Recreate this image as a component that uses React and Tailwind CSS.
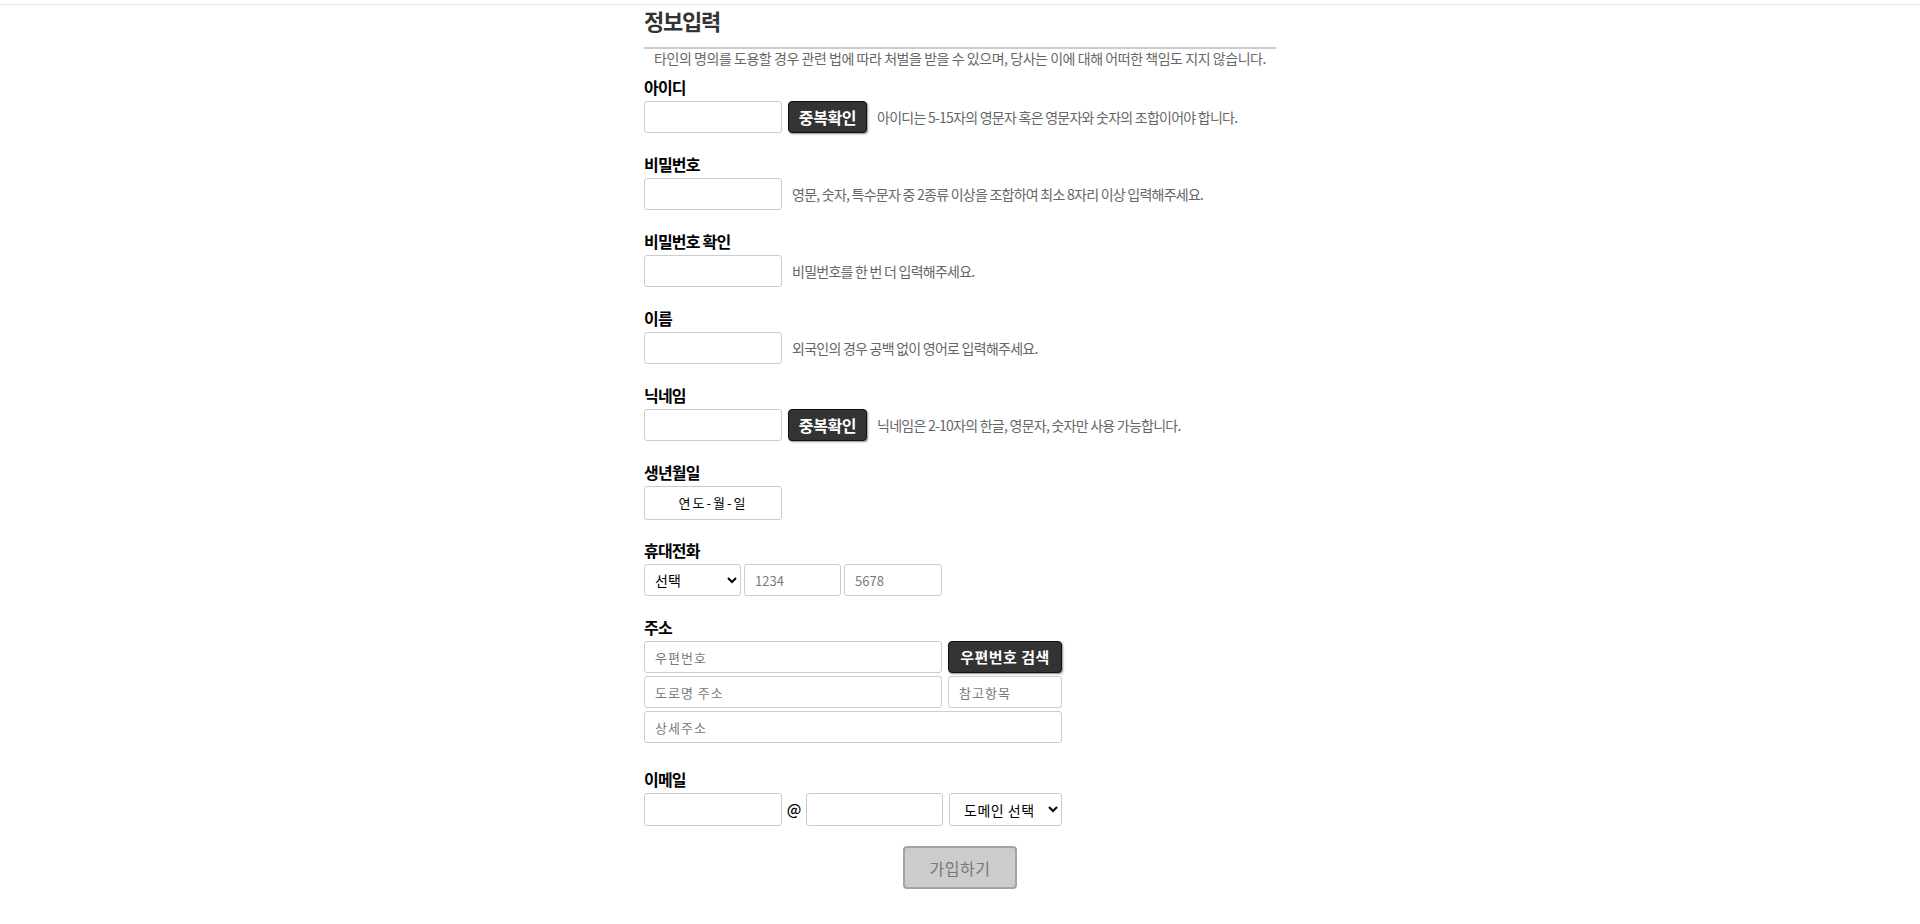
import { useState } from "react";

const baseInput =
  "h-[32px] rounded-[3px] border border-[#cccccc] bg-white px-[10px] text-[13px] text-black outline-none placeholder:text-[#7a7a7a]";
const inputCls = `${baseInput} tracking-[1px]`;

function Label({ children }) {
  return (
    <label className="block h-[24px] text-[16px] leading-[24px] font-bold tracking-[-0.8px] text-black">
      {children}
    </label>
  );
}

function Help({ children }) {
  return (
    <span className="ml-[10px] text-[14px] tracking-[-0.75px] text-[#666666]">
      {children}
    </span>
  );
}

function DarkButton({ children, className = "" }) {
  return (
    <button
      type="button"
      className={`h-[32px] rounded-[4px] border border-[#111111] bg-[#333333] text-white font-bold shadow-[1px_1px_2px_rgba(0,0,0,0.45)] ${className}`}
    >
      {children}
    </button>
  );
}

export default function App() {
  const [form, setForm] = useState({});
  const set = (k) => (e) => setForm({ ...form, [k]: e.target.value });

  return (
    <div className="min-h-screen bg-white font-['Noto_Sans_CJK_KR','Noto_Sans',sans-serif]">
      <div className="h-[5px] border-b border-[#e3e3e3]" />

      <div className="mx-auto w-[632px] pb-10">
        <h2 className="text-[22px] leading-[30px] font-bold tracking-[-1.2px] text-[#333333]">
          정보입력
        </h2>
        <hr className="mt-[12px] border-t-2 border-[#cccccc]" />
        <p className="text-center text-[14px] leading-[18px] tracking-[-0.45px] text-[#666666]">
          타인의 명의를 도용할 경우 관련 법에 따라 처벌을 받을 수 있으며, 당사는 이에 대해 어떠한 책임도 지지 않습니다.
        </p>

        <div className="mt-[8px]">
          {/* 아이디 */}
          <div className="mb-[19px]">
            <Label>아이디</Label>
            <div className="mt-[2px] flex items-center">
              <input className={`${inputCls} w-[138px]`} value={form.id || ""} onChange={set("id")} />
              <DarkButton className="ml-[6px] w-[79px] text-[16px] tracking-[-0.4px]">중복확인</DarkButton>
              <Help>아이디는 5-15자의 영문자 혹은 영문자와 숫자의 조합이어야 합니다.</Help>
            </div>
          </div>

          {/* 비밀번호 */}
          <div className="mb-[19px]">
            <Label>비밀번호</Label>
            <div className="mt-[2px] flex items-center">
              <input type="password" className={`${inputCls} w-[138px]`} />
              <Help>영문, 숫자, 특수문자 중 2종류 이상을 조합하여 최소 8자리 이상 입력해주세요.</Help>
            </div>
          </div>

          <div className="mb-[19px]">
            <Label>비밀번호 확인</Label>
            <div className="mt-[2px] flex items-center">
              <input type="password" className={`${inputCls} w-[138px]`} />
              <Help>비밀번호를 한 번 더 입력해주세요.</Help>
            </div>
          </div>

          <div className="mb-[19px]">
            <Label>이름</Label>
            <div className="mt-[2px] flex items-center">
              <input className={`${inputCls} w-[138px]`} />
              <Help>외국인의 경우 공백 없이 영어로 입력해주세요.</Help>
            </div>
          </div>

          <div className="mb-[19px]">
            <Label>닉네임</Label>
            <div className="mt-[2px] flex items-center">
              <input className={`${inputCls} w-[138px]`} />
              <DarkButton className="ml-[6px] w-[79px] text-[16px] tracking-[-0.4px]">중복확인</DarkButton>
              <Help>닉네임은 2-10자의 한글, 영문자, 숫자만 사용 가능합니다.</Help>
            </div>
          </div>

          {/* 생년월일 */}
          <div className="mb-[18px]">
            <Label>생년월일</Label>
            <div className="mt-[2px] flex h-[34px] w-[138px] items-center justify-center rounded-[3px] border border-[#cccccc] text-[13px] tracking-[2px] text-black">
              연도-월-일
            </div>
          </div>

          {/* 휴대전화 */}
          <div className="mb-[19px]">
            <Label>휴대전화</Label>
            <div className="mt-[2px] flex items-center">
              <select className="h-[32px] w-[97px] rounded-[3px] border border-[#cccccc] bg-white pl-[6px] text-[14px] text-black">
                <option>선택</option>
                <option>010</option>
                <option>011</option>
                <option>016</option>
              </select>
              <input className={`${baseInput} ml-[3px] w-[97px]`} placeholder="1234" />
              <input className={`${baseInput} ml-[3px] w-[98px]`} placeholder="5678" />
            </div>
          </div>

          {/* 주소 */}
          <div className="mb-[24px]">
            <Label>주소</Label>
            <div className="mt-[2px] flex flex-col gap-[3px]">
              <div className="flex items-center">
                <input className={`${inputCls} w-[298px]`} placeholder="우편번호" />
                <DarkButton className="ml-[6px] w-[114px] text-[15px] tracking-[0.5px]">우편번호 검색</DarkButton>
              </div>
              <div className="flex items-center">
                <input className={`${inputCls} w-[298px]`} placeholder="도로명 주소" />
                <input className={`${inputCls} ml-[6px] w-[114px]`} placeholder="참고항목" />
              </div>
              <input className={`${inputCls} w-[418px]`} placeholder="상세주소" />
            </div>
          </div>

          {/* 이메일 */}
          <div>
            <Label>이메일</Label>
            <div className="mt-[2px] flex items-center">
              <input className={`${inputCls} h-[33px] w-[138px]`} />
              <span className="w-[24px] text-center text-[15px] font-medium text-black">@</span>
              <input className={`${inputCls} h-[33px] w-[137px]`} />
              <select className="ml-[6px] h-[33px] w-[113px] rounded-[3px] border border-[#cccccc] bg-white pl-[10px] text-[14px] tracking-[0.5px] text-black">
                <option>도메인 선택</option>
                <option>naver.com</option>
                <option>gmail.com</option>
                <option>daum.net</option>
              </select>
            </div>
          </div>

          <button
            type="submit"
            className="mx-auto mt-[20px] block h-[43px] w-[114px] rounded-[4px] border-2 border-[#a3a3a3] bg-[#cccccc] text-[16px] tracking-[0.5px] text-[#777777]"
          >
            가입하기
          </button>
        </div>
      </div>
    </div>
  );
}
